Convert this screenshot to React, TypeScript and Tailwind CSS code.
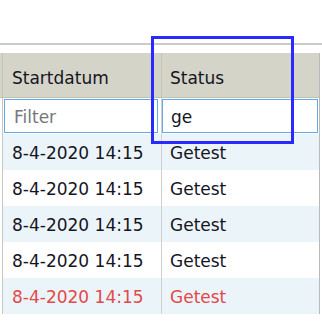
const rows = [
  { date: '8-4-2020 14:15', status: 'Getest', red: false },
  { date: '8-4-2020 14:15', status: 'Getest', red: false },
  { date: '8-4-2020 14:15', status: 'Getest', red: false },
  { date: '8-4-2020 14:15', status: 'Getest', red: false },
  { date: '8-4-2020 14:15', status: 'Getest', red: true },
];

const App = () => {
  return (
    <div className="relative w-[322px] h-[322px] overflow-hidden bg-white font-['DejaVu_Sans',sans-serif] text-[17px] text-[#15151f]">
      <div className="h-[43px]" />
      <div className="h-[2px] bg-[#cbcbcb]" />
      <div className="h-[8px]" />

      {/* grid */}
      <div className="w-[320px] border-r border-[#b9b9b9]">
        {/* header */}
        <div className="flex h-[45px] bg-[#d5d4c8] border-b border-[#c2c1b6]">
          <div className="w-[2px]" />
          <div className="w-[160px] flex items-center pt-[7px] pl-[9px] border-l border-r border-[#c4c3b8]">Startdatum</div>
          <div className="flex-1 flex items-center pt-[7px] pl-[8px]">Status</div>
        </div>

        {/* filter row */}
        <div className="flex h-[36px] bg-white border-l border-[#c6c6c6] ml-[2px]">
          <div className="w-[159px] py-[1px] pl-[1px] pr-[3px] border-r border-[#d0d0d0]">
            <input
              placeholder="Filter"
              className="w-full h-full border border-[#63a9e6] pt-[2px] pl-[9px] outline-none placeholder-[#767680] text-[17px]"
            />
          </div>
          <div className="flex-1 py-[1px] pr-[1px]">
            <input
              defaultValue="ge"
              className="w-full h-full border border-[#63a9e6] pt-[2px] pl-[8px] outline-none text-[17px] text-[#15151f]"
            />
          </div>
        </div>

        {/* data rows */}
        <div className="ml-[2px] border-l border-[#c6c6c6]">
          {rows.map((row, i) => (
            <div
              key={i}
              className={`flex h-[36px] ${i % 2 === 0 ? 'bg-[#ebf4f8]' : 'bg-white'} ${row.red ? 'text-[#e44848]' : ''}`}
            >
              <div className="w-[159px] flex items-center pt-[3px] pl-[9px] border-r border-[#d0d0d0]">{row.date}</div>
              <div className="flex-1 flex items-center pt-[3px] pl-[8px]">{row.status}</div>
            </div>
          ))}
        </div>
      </div>

      {/* highlight box */}
      <div className="absolute left-[151px] top-[36px] w-[143px] h-[108px] border-[3px] border-[#2a2aff]" />
    </div>
  );
};

export default App;
